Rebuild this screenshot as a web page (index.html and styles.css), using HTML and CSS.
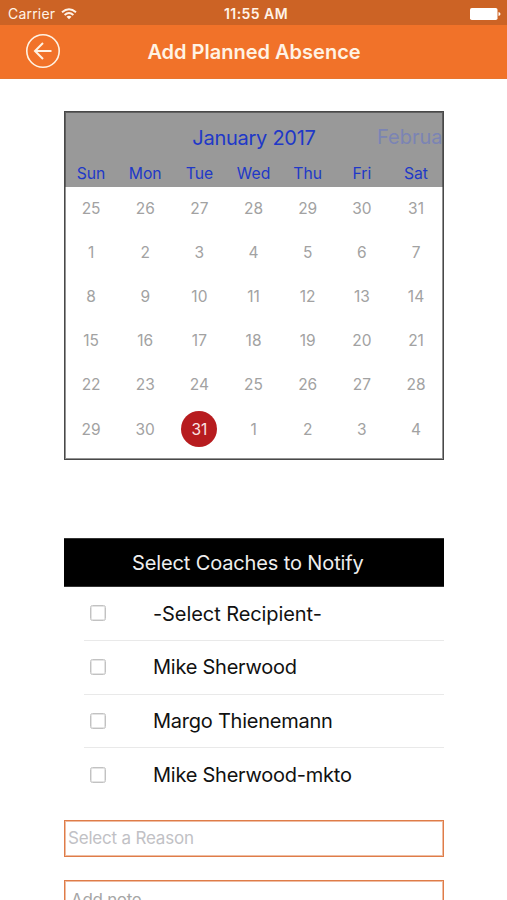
FILE: index.html
```html
<!DOCTYPE html>
<html lang="en">
<head>
<meta charset="utf-8">
<title>Add Planned Absence</title>
<link rel="stylesheet" href="styles.css">
</head>
<body>
<div class="status">
  <div class="carrier"><span>Carrier</span>
    <svg width="16" height="12" viewBox="0 0 16 12" fill="none" stroke="#fff3e8" stroke-width="1.9"><path d="M1 4.3Q8-2 15 4.3M3.6 7Q8 3 12.4 7"/><path d="M8 11.3 5.5 8.8Q8 6.8 10.5 8.8Z" fill="#fff3e8" stroke="none"/></svg>
  </div>
  <div class="time">11:55 AM</div>
  <svg class="battery" width="31" height="12" viewBox="0 0 31 12" fill="#fff"><rect width="27.5" height="12" rx="1.8"/><path d="M28.5 4q2 .4 2 2t-2 2z"/></svg>
</div>
<header class="nav">
  <svg class="back" width="36" height="36" viewBox="0 0 36 36" fill="none" stroke="#fff3e4"><circle cx="18" cy="18" r="16.2" stroke-width="1.6"/><path d="M26.5 18H10.5M18 10 10 18l8 8" stroke-width="2"/></svg>
  <h1>Add Planned Absence</h1>
</header>
<main>
  <section class="calendar">
    <div class="cal-head">
      <div class="months"><span class="month">January 2017</span><span class="next">Februa</span></div>
      <div class="week"><span>Sun</span><span>Mon</span><span>Tue</span><span>Wed</span><span>Thu</span><span>Fri</span><span>Sat</span></div>
    </div>
    <div class="days">
      <span>25</span><span>26</span><span>27</span><span>28</span><span>29</span><span>30</span><span>31</span>
      <span>1</span><span>2</span><span>3</span><span>4</span><span>5</span><span>6</span><span>7</span>
      <span>8</span><span>9</span><span>10</span><span>11</span><span>12</span><span>13</span><span>14</span>
      <span>15</span><span>16</span><span>17</span><span>18</span><span>19</span><span>20</span><span>21</span>
      <span>22</span><span>23</span><span>24</span><span>25</span><span>26</span><span>27</span><span>28</span>
      <span>29</span><span>30</span><span class="today">31</span><span>1</span><span>2</span><span>3</span><span>4</span>
    </div>
  </section>
  <section class="coaches">
    <h2>Select Coaches to Notify</h2>
    <ul>
      <li><i class="box"></i><span class="dashed">-Select Recipient-</span></li>
      <li><i class="box"></i><span>Mike Sherwood</span></li>
      <li><i class="box"></i><span>Margo Thienemann</span></li>
      <li><i class="box"></i><span>Mike Sherwood-mkto</span></li>
    </ul>
  </section>
  <div class="field reason"><span>Select a Reason</span></div>
  <div class="field note"><span>Add note</span></div>
</main>
</body>
</html>
```
FILE: styles.css
```css
* { box-sizing: border-box; margin: 0; padding: 0; }
body { width: 507px; height: 900px; overflow: hidden; background: #fff; font-family: Inter, "Liberation Sans", sans-serif; color: #111; }
.status { height: 25px; background: #cc6325; color: #fff3e8; display: grid; grid-template-columns: 1fr auto 1fr; align-items: center; padding: 2px 6px 0 8px; }
.carrier { display: flex; align-items: center; gap: 6px; font-size: 14px; letter-spacing: .2px; }
.time { font-size: 14px; font-weight: 600; letter-spacing: .45px; padding-left: 3px; }
.battery { justify-self: end; }
.nav { height: 54px; background: #f17229; border-bottom: 1px solid #e8762f; display: grid; grid-template-columns: 60px 1fr 60px; align-items: center; }
.back { margin-left: 25px; margin-top: -2px; }
.nav h1 { font-size: 20px; font-weight: 600; color: #fff3e4; text-align: center; white-space: nowrap; padding-left: 1px; }
main { width: 380px; margin: 32px 0 0 64px; }
.calendar { height: 349px; border: 1px solid #484848; outline: 1px solid rgba(40, 40, 40, .5); outline-offset: -2px; }
.cal-head { height: 75px; background: #999; color: #2038c8; }
.months { height: 50px; display: grid; grid-template-columns: 1fr; align-items: center; overflow: hidden; position: relative; font-size: 20px; letter-spacing: -.27px; }
.month { text-align: center; padding-top: 1px; }
.next { position: absolute; left: 312px; top: 13px; line-height: 24px; letter-spacing: 0; color: #7b84b4; white-space: nowrap; }
.week { display: grid; grid-template-columns: repeat(7, 54.17px); margin-left: -1px; text-align: center; font-size: 15.7px; line-height: 23px; }
.days { display: grid; grid-template-columns: repeat(7, 54.17px); grid-auto-rows: 44.2px; margin-left: -1px; margin-top: -1px; place-items: center; font-size: 15.5px; color: #a2a2a2; }
.today { width: 36px; height: 36px; border-radius: 50%; background: #b71c1f; color: #fbe4e4; display: flex; align-items: center; justify-content: center; }
.coaches { margin-top: 78px; }
.coaches h2 { height: 49px; background: #000; color: #eee; font-size: 20px; font-weight: 400; letter-spacing: -.13px; display: flex; align-items: center; padding: 1px 0 0 68px; border: 1px solid #333; border-width: 1px 0; }
.coaches ul { list-style: none; margin-left: 20px; }
.coaches li { height: 53.8px; display: flex; align-items: center; border-bottom: 1px solid #e9e9e9; font-size: 20px; letter-spacing: -.24px; }
.coaches li:last-child { border: 0; }
.coaches .dashed { letter-spacing: -.08px; padding-top: 1px; }
.box { width: 16px; height: 16px; border: 1px solid #c2c2c2; box-shadow: inset 0 0 0 1px #e4e4e4; border-radius: 2.5px; margin: 0 47px 0 6px; }
.field { border: 1px solid #df7c48; outline: 1px solid rgba(224, 124, 72, .5); outline-offset: -2px; }
.reason { height: 37px; margin-top: 18px; padding: 0 0 2px 3px; display: flex; align-items: center; font-size: 17px; letter-spacing: -.2px; color: #c1c1c5; }
.note { height: 60px; margin-top: 23px; padding: 9px 0 0 6px; font-size: 17px; letter-spacing: -.3px; color: #a6a6a6; }
```
